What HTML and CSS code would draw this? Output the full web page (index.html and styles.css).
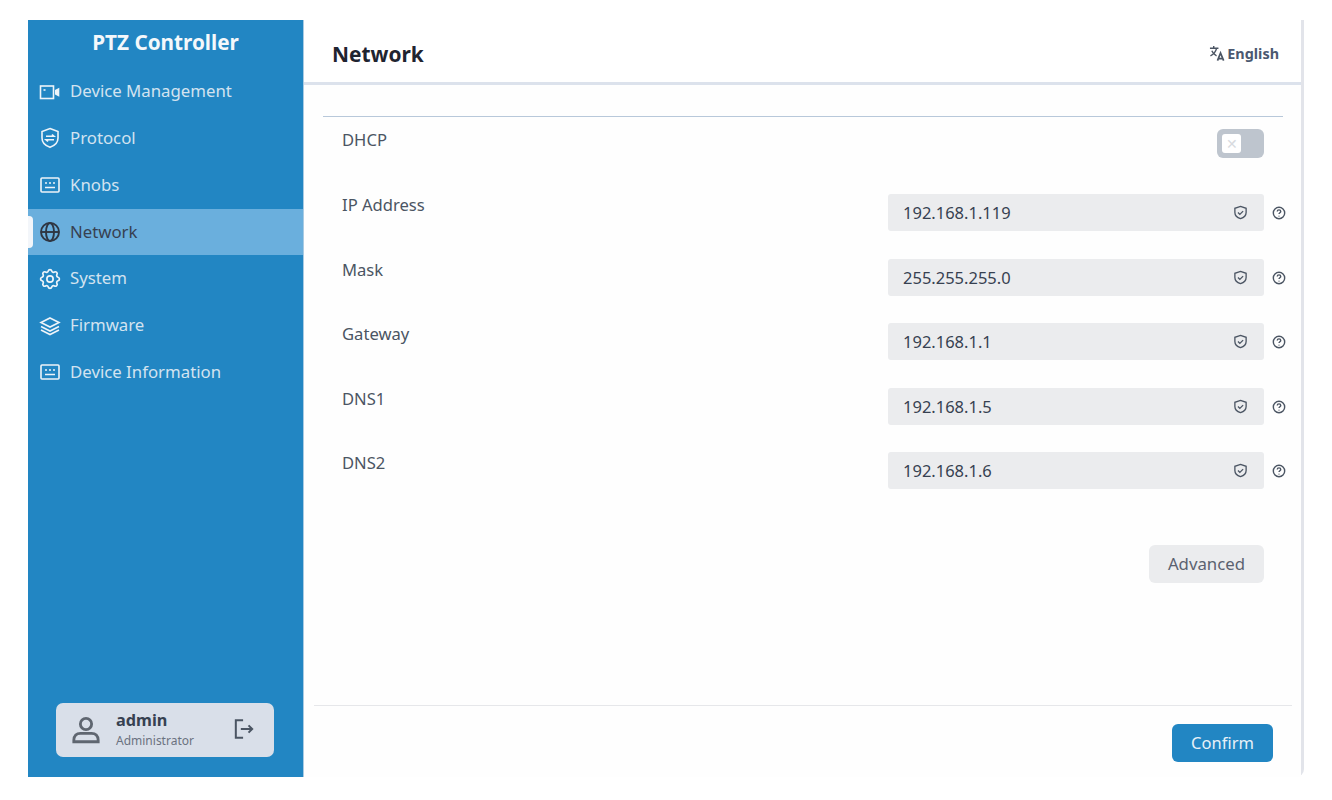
FILE: index.html
```html
<!DOCTYPE html>
<html lang="en">
<head>
<meta charset="utf-8">
<title>PTZ Controller</title>
<link rel="stylesheet" href="styles.css">
</head>
<body>
<div class="app">
  <aside class="sidebar">
    <h1 class="brand">PTZ Controller</h1>
    <nav class="nav">
      <a class="nav-item"><svg class="nav-icon" viewBox="0 0 22 22"><rect x="1.500" y="5" width="13" height="12.500"/><path d="M4.500 9h2"/><path d="M16.800 9.500l2.700-1.500v6.500l-2.700-1.500z" fill="currentColor"/></svg><span>Device Management</span></a>
      <a class="nav-item"><svg class="nav-icon" viewBox="0 0 22 22"><path d="M11 1.500l8 3v6.500c0 4.500-3.300 7.700-8 9.300-4.700-1.600-8-4.800-8-9.300V4.500z"/><path d="M7 9.300h8l-2-1.800M15 12.700H7l2 1.800"/></svg><span>Protocol</span></a>
      <a class="nav-item"><svg class="nav-icon" viewBox="0 0 22 22"><rect x="2" y="4" width="18" height="14" rx="1"/><path d="M6 9h2M10 9h2M14 9h2M6 13.500h10"/></svg><span>Knobs</span></a>
      <a class="nav-item active"><svg class="nav-icon" viewBox="0 0 22 22"><circle cx="11" cy="11" r="9"/><ellipse cx="11" cy="11" rx="4" ry="9"/><path d="M2 11h18"/></svg><span>Network</span></a>
      <a class="nav-item"><svg class="nav-icon" viewBox="1.500 1.500 21 21"><path d="M10.325 4.317c.426-1.756 2.924-1.756 3.350 0a1.724 1.724 0 0 0 2.573 1.066c1.543-.94 3.310.826 2.370 2.370a1.724 1.724 0 0 0 1.065 2.572c1.756.426 1.756 2.924 0 3.350a1.724 1.724 0 0 0-1.066 2.573c.94 1.543-.826 3.310-2.370 2.370a1.724 1.724 0 0 0-2.572 1.065c-.426 1.756-2.924 1.756-3.350 0a1.724 1.724 0 0 0-2.573-1.066c-1.543.94-3.310-.826-2.370-2.370a1.724 1.724 0 0 0-1.065-2.572c-1.756-.426-1.756-2.924 0-3.350a1.724 1.724 0 0 0 1.066-2.573c-.94-1.543.826-3.310 2.370-2.370 1 .608 2.296.07 2.572-1.065z"/><circle cx="12" cy="12" r="3"/></svg><span>System</span></a>
      <a class="nav-item"><svg class="nav-icon" viewBox="0 0 22 22"><path d="M11 3l9 4.500-9 4.500-9-4.500z"/><path d="M2 11.500l9 4.500 9-4.500M2 15l9 4.500 9-4.500"/></svg><span>Firmware</span></a>
      <a class="nav-item"><svg class="nav-icon" viewBox="0 0 22 22"><rect x="2" y="4" width="18" height="14" rx="1"/><path d="M6 9h2M10 9h2M14 9h2M6 13.500h10"/></svg><span>Device Information</span></a>
    </nav>
    <div class="user-card">
      <svg class="user-icon" viewBox="0 0 32 32"><circle cx="16" cy="9.500" r="6"/><path d="M3 27c0-5 3-7.500 7-7.500h12c4 0 7 2.500 7 7.500v1.500H3z"/></svg>
      <div class="user-text"><strong>admin</strong><small>Administrator</small></div>
      <svg class="logout-icon" viewBox="0 0 22 22"><path d="M10 1.500H2v19h8"/><path d="M7.500 11H20M16 7l4 4-4 4"/></svg>
    </div>
  </aside>
  <main class="main">
    <header class="topbar">
      <h2 class="title">Network</h2>
      <div class="lang"><svg class="lang-icon" viewBox="0 0 18 18"><path d="M1 3.500h9M5 1v2.500M8 3.500C7 7.500 4.500 10 1.500 11.500M3 6c1 2.500 3 4.500 5 5.500"/><path d="M9 16.500l3.200-8 3.300 8M10 14.500h4.500" stroke-width="1.800"/></svg><span>English</span></div>
    </header>
    <section class="content">
      <div class="form">
        <div class="row row-dhcp">
          <label class="label">DHCP</label>
          <div class="toggle"><span class="knob">✕</span></div>
        </div>
        <div class="row">
          <label class="label">IP Address</label>
          <div class="field"><span>192.168.1.119</span><svg class="shield" viewBox="0 0 16 16"><path d="M8 1.500l6 2v4.500c0 3.500-2.500 5.500-6 6.500-3.500-1-6-3-6-6.500V3.500z"/><path d="M5.300 8l2 2 3.500-3.500"/></svg></div>
          <svg class="help" viewBox="0 0 16 16"><circle cx="8" cy="8" r="6.500"/><path d="M6 6.300c0-1.200.9-1.900 2-1.900s2 .7 2 1.800c0 1.500-2 1.500-2 3"/><path d="M8 11v1"/></svg>
        </div>
        <div class="row">
          <label class="label">Mask</label>
          <div class="field"><span>255.255.255.0</span><svg class="shield" viewBox="0 0 16 16"><path d="M8 1.500l6 2v4.500c0 3.500-2.500 5.500-6 6.500-3.500-1-6-3-6-6.500V3.500z"/><path d="M5.300 8l2 2 3.500-3.500"/></svg></div>
          <svg class="help" viewBox="0 0 16 16"><circle cx="8" cy="8" r="6.500"/><path d="M6 6.300c0-1.200.9-1.900 2-1.900s2 .7 2 1.800c0 1.500-2 1.500-2 3"/><path d="M8 11v1"/></svg>
        </div>
        <div class="row">
          <label class="label">Gateway</label>
          <div class="field"><span>192.168.1.1</span><svg class="shield" viewBox="0 0 16 16"><path d="M8 1.500l6 2v4.500c0 3.500-2.500 5.500-6 6.500-3.500-1-6-3-6-6.500V3.500z"/><path d="M5.300 8l2 2 3.500-3.500"/></svg></div>
          <svg class="help" viewBox="0 0 16 16"><circle cx="8" cy="8" r="6.500"/><path d="M6 6.300c0-1.200.9-1.900 2-1.900s2 .7 2 1.800c0 1.500-2 1.500-2 3"/><path d="M8 11v1"/></svg>
        </div>
        <div class="row">
          <label class="label">DNS1</label>
          <div class="field"><span>192.168.1.5</span><svg class="shield" viewBox="0 0 16 16"><path d="M8 1.500l6 2v4.500c0 3.500-2.500 5.500-6 6.500-3.500-1-6-3-6-6.500V3.500z"/><path d="M5.300 8l2 2 3.500-3.500"/></svg></div>
          <svg class="help" viewBox="0 0 16 16"><circle cx="8" cy="8" r="6.500"/><path d="M6 6.300c0-1.200.9-1.900 2-1.900s2 .7 2 1.800c0 1.500-2 1.500-2 3"/><path d="M8 11v1"/></svg>
        </div>
        <div class="row">
          <label class="label">DNS2</label>
          <div class="field"><span>192.168.1.6</span><svg class="shield" viewBox="0 0 16 16"><path d="M8 1.500l6 2v4.500c0 3.500-2.500 5.500-6 6.500-3.500-1-6-3-6-6.500V3.500z"/><path d="M5.300 8l2 2 3.500-3.500"/></svg></div>
          <svg class="help" viewBox="0 0 16 16"><circle cx="8" cy="8" r="6.500"/><path d="M6 6.300c0-1.200.9-1.900 2-1.900s2 .7 2 1.800c0 1.500-2 1.500-2 3"/><path d="M8 11v1"/></svg>
        </div>
        <div class="advanced-row"><button class="btn-advanced">Advanced</button></div>
      </div>
      <footer class="footer"><button class="btn-confirm">Confirm</button></footer>
    </section>
  </main>
</div>
</body>
</html>
```

FILE: styles.css
```css
* { box-sizing: border-box; }
html, body { margin: 0; height: 100%; background: #fff; }
body {
  padding: 20px 28px 23px 28px;
  font-family: "Noto Sans", "Open Sans", sans-serif;
  color: #4b5563;
}
.app { display: flex; height: 757px; width: 1276px; }

.sidebar {
  width: 276px;
  flex: none;
  background: #2286c3;
  border-right: 1px solid #a9cbe3;
  display: flex;
  flex-direction: column;
  color: #e5edf5;
}
.brand {
  margin: 0;
  height: 48.300px;
  padding-top: 6px;
  text-align: center;
  font-size: 20.700px;
  line-height: 32px;
  font-weight: 700;
  color: #f4f8fb;
}
.nav { display: flex; flex-direction: column; }
.nav-item {
  position: relative;
  height: 46.800px;
  display: flex;
  align-items: center;
  gap: 9px;
  padding-left: 11px;
  font-size: 16.800px;
  color: #d3e3f0;
}
.nav-item span { position: relative; top: -1px; }
.nav-item.active { background: #6aafdd; color: #374151; }
.nav-item.active::before {
  content: "";
  position: absolute;
  left: 0;
  top: 7px;
  width: 5px;
  height: 32px;
  background: #f3f6fa;
  border-radius: 0 4px 4px 0;
}
.nav-icon {
  width: 22px;
  height: 22px;
  flex: none;
  fill: none;
  stroke: #eef4f9;
  color: #eef4f9;
  stroke-width: 1.600;
}
.active .nav-icon { stroke: #2f3642; stroke-width: 1.900; }

.user-card {
  margin: auto 0 20px 28px;
  width: 218px;
  height: 54px;
  background: #d9dfe9;
  border-radius: 7px;
  display: flex;
  align-items: center;
  padding-left: 15px;
  position: relative;
}
.user-icon { width: 30px; height: 30px; fill: none; stroke: #5f6670; stroke-width: 3; flex: none; }
.user-text { display: flex; flex-direction: column; margin-left: 15px; }
.user-text strong { font-size: 16.300px; line-height: 22px; color: #374151; font-weight: 700; }
.user-text small { font-size: 12px; line-height: 20px; color: #6b7280; }
.logout-icon { position: absolute; right: 20px; top: 16px; width: 20px; height: 20px; fill: none; stroke: #4b5563; stroke-width: 2.200; }

.main {
  flex: 1;
  display: flex;
  flex-direction: column;
  border-right: 3px solid #e2e4ea;
  border-radius: 0 0 8px 0;
  min-width: 0;
}
.topbar {
  height: 65px;
  flex: none;
  display: flex;
  align-items: center;
  justify-content: space-between;
  padding: 5px 22px 0 28px;
  border-bottom: 3px solid #dce2ec;
}
.title { margin: 0; font-size: 20.900px; line-height: 30px; font-weight: 700; color: #1f2430; }
.lang { display: flex; align-items: center; gap: 1px; font-size: 14.400px; font-weight: 700; color: #4b5870; }
.lang-icon { width: 17px; height: 17px; fill: none; stroke: #4b5563; stroke-width: 1.500; }

.content { flex: 1; display: flex; flex-direction: column; padding: 0 9px 0 10px; background: #fefefe; }
.form {
  flex: 1;
  margin: 31px 9px 0 9px;
  border-top: 1px solid #b8c8da;
  padding: 0 19px;
}
.row {
  position: relative;
  display: flex;
  justify-content: space-between;
  height: 37px;
  margin-bottom: 27.600px;
  font-size: 16.600px;
}
.row-dhcp { height: 29px; margin-top: 12px; margin-bottom: 36px; }
.label { line-height: 22px; color: #4b5563; }
.toggle {
  width: 47px;
  height: 29px;
  background: #bec5ce;
  border-radius: 6px;
  padding: 5px;
}
.knob {
  display: flex;
  align-items: center;
  justify-content: center;
  width: 19px;
  height: 19px;
  background: #fff;
  border-radius: 3px;
  font-size: 14px;
  line-height: 1;
  color: #d8dbe0;
}
.field {
  width: 376px;
  height: 37px;
  background: #ebecee;
  border-radius: 3px;
  display: flex;
  align-items: center;
  justify-content: space-between;
  padding: 0 16px 0 15px;
  font-size: 16.500px;
  color: #374151;
}
.shield { width: 15px; height: 15px; fill: none; stroke: #4b5563; stroke-width: 1.400; }
.help {
  position: absolute;
  right: -22px;
  top: 12px;
  width: 14px;
  height: 14px;
  fill: none;
  stroke: #4b5563;
  stroke-width: 1.600;
}
.advanced-row { display: flex; justify-content: flex-end; padding-top: 28px; }
.btn-advanced {
  width: 115px;
  height: 38px;
  border: 0;
  border-radius: 6px;
  background: #ebecee;
  font: 16.800px "Noto Sans", "Open Sans", sans-serif;
  color: #5b6270;
}
.footer {
  flex: none;
  height: 72px;
  border-top: 1px solid #e6e7ea;
  display: flex;
  justify-content: flex-end;
  align-items: flex-start;
  padding: 18px 19px 0 0;
}
.btn-confirm {
  width: 101px;
  height: 38px;
  border: 0;
  border-radius: 6px;
  background: #2286c3;
  color: #e8f1f8;
  padding-bottom: 3px;
  font: 16.500px "Noto Sans", "Open Sans", sans-serif;
}
```
